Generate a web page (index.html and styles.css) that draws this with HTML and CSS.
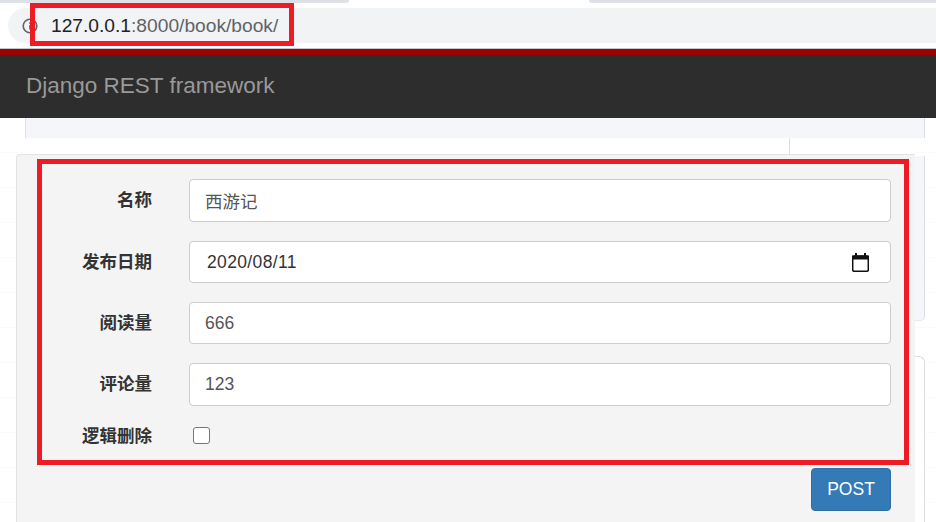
FILE: index.html
```html
<!DOCTYPE html>
<html lang="zh-CN">
<head>
<meta charset="utf-8">
<title>Book</title>
<link rel="stylesheet" href="styles.css">
</head>
<body>
<div class="browser">
  <div class="tabs"><span class="tab tab-left"></span><span class="tab tab-right"></span></div>
  <div class="address">
    <svg class="info" width="16" height="16" viewBox="0 0 16 16"><circle cx="8" cy="8" r="6.800" fill="none" stroke="#5f6368" stroke-width="1.600"/><rect x="7.200" y="7" width="1.600" height="4.500" fill="#5f6368"/><rect x="7.200" y="4.300" width="1.600" height="1.600" fill="#5f6368"/></svg>
    <span class="url"><span class="host">127.0.0.1</span>:8000/book/book/</span>
  </div>
</div>
<div class="navbar"><span class="brand">Django REST framework</span></div>
<div class="content">
  <div class="strip"></div>
  <div class="table-end"><div class="table-edge"></div></div>
  <div class="panel">
    <form class="form">
      <div class="row"><label class="label">名称</label><div class="input">西游记</div></div>
      <div class="row"><label class="label">发布日期</label><div class="input short date"><span>2020/08/11</span>
        <svg width="17" height="19" viewBox="0 0 17 19"><rect x="0.700" y="3" width="15.600" height="15.300" rx="1.500" fill="none" stroke="#111" stroke-width="1.500"/><rect x="0" y="2.500" width="17" height="4" fill="#111"/><rect x="3" y="0" width="2" height="3" fill="#111"/><rect x="12" y="0" width="2" height="3" fill="#111"/></svg>
      </div></div>
      <div class="row"><label class="label">阅读量</label><div class="input short">666</div></div>
      <div class="row"><label class="label">评论量</label><div class="input">123</div></div>
      <div class="row check-row"><label class="label">逻辑删除</label><input class="check" type="checkbox"></div>
      <div class="actions"><button class="post" type="button">POST</button></div>
    </form>
    <div class="rail"></div>
    <div class="side-card"></div>
  </div>
</div>
<div class="mark mark-url"></div>
<div class="mark mark-form"></div>
</body>
</html>
```
FILE: styles.css
```css
* { box-sizing: border-box; }
html, body { margin: 0; height: 522px; overflow: hidden; background: #fff; }
body { font-family: "Liberation Sans", "Noto Sans CJK SC", sans-serif; position: relative; }

.browser { height: 48px; background: #fff; }
.tabs { height: 8px; display: flex; justify-content: space-between; }
.tab { display: block; height: 3px; background: #dee1e6; }
.tab-left { width: 349px; border-bottom-right-radius: 6px; }
.tab-right { width: 347px; border-bottom-left-radius: 6px; }
.address { height: 35px; margin-left: 8px; background: #f1f3f4; border-radius: 18px 0 0 18px; display: flex; align-items: center; padding-left: 14px; gap: 13px; }
.url { font-size: 19.200px; color: #5f6368; line-height: 35px; }
.host { color: #202124; }

.navbar { height: 70px; background: #2d2d2d; border-top: 1px solid #c8c8c8; box-shadow: inset 0 6px 0 #a00000; padding: 4px 0 0 26px; display: flex; align-items: center; }
.brand { font-size: 22.500px; color: #999; }

.content {
  height: 404px; padding-left: 25px; position: relative;
  background:
    repeating-linear-gradient(to bottom, transparent 0 34px, #fbfbfb 34px 35px),
    repeating-linear-gradient(to right, transparent 0 67px, #fcfcfc 67px 68px);
}
.strip { width: 900px; height: 20px; background: #f5f6f9; border-left: 1px solid #e0e0e0; border-right: 1px solid #dcdce6; }
.table-end { width: 890px; height: 17px; background: #fff; }
.table-edge { width: 765px; height: 17px; border-right: 1px solid #ddd; border-bottom: 1px solid #ddd; }

.panel { margin: -1px 0 0 -9px; width: 899px; height: 368px; background: #f4f4f4; border: 1px solid #e3e3e3; border-bottom: 0; border-right: 0; border-radius: 4px 0 0 0; position: relative; }
.form { padding: 24px 24px 0 0; }
.row { display: flex; align-items: center; margin-bottom: 19px; }
.label { width: 135px; text-align: right; font-size: 17.500px; font-weight: bold; color: #333; flex: none; margin-right: 37px; position: relative; top: -2px; }
.input { flex: 1; height: 43px; background: #fff; border: 1px solid #ccc; border-radius: 4px; padding: 0 15px; font-size: 17.500px; color: #555; display: flex; align-items: center; }
.short { height: 42px; }
.date { justify-content: space-between; color: #333; padding: 0 21px 0 17px; letter-spacing: 0.350px; }
.check-row { height: 20px; margin: 1px 0 23px; }
.check-row .label { top: -1px; }
.check { width: 17px; height: 17px; margin: 0 0 0 4px; appearance: none; background: #fff; border: 1px solid #767676; border-radius: 3px; }
.actions { display: flex; justify-content: flex-end; }
.post { width: 80px; height: 43px; background: #337ab7; color: #fff; border: 1px solid #2e6da4; border-radius: 4px; font: 17.500px "Liberation Sans", sans-serif; padding: 0; }
.rail { position: absolute; left: 898px; top: 1px; width: 10px; height: 165px; background: #f5f6f9; border-right: 1px solid #dcdce6; border-bottom: 1px solid #e6e6ec; border-radius: 0 0 5px 0; }
.side-card { position: absolute; left: 898px; top: 201px; width: 10px; height: 170px; background: #fff; border: 1px solid #ddd; border-left: 0; border-bottom: 0; border-radius: 0 6px 0 0; }

.mark { position: absolute; border: 5px solid #ed1c24; }
.mark-url { left: 30px; top: 3px; width: 264px; height: 43px; }
.mark-form { left: 37px; top: 159px; width: 872px; height: 306px; }
```
